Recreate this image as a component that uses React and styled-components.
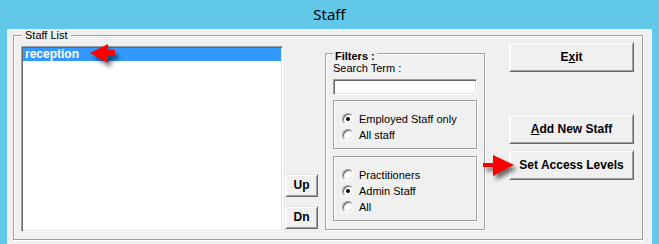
import React from "react";
import styled, { createGlobalStyle } from "styled-components";

const Global = createGlobalStyle`
  html, body { margin: 0; padding: 0; overflow: hidden; background: #62c8e9; }
`;

const Window = styled.div`
  position: relative;
  width: 659px;
  height: 244px;
  background: #62c8e9;
  display: flex;
  flex-direction: column;
  font-family: "Liberation Sans", Arial, sans-serif;
  color: #000;
`;

const TitleBar = styled.div`
  height: 29px;
  display: flex;
  align-items: center;
  justify-content: center;
  font-family: "Noto Sans", sans-serif;
  font-size: 15px;
  padding-bottom: 1px;
  box-sizing: border-box;
`;

const Client = styled.div`
  flex: 1;
  width: 645px;
  margin-left: 7px;
  background: #f0f0f0;
  padding: 6px 0 0 6px;
  box-sizing: border-box;
`;

const Etched = styled.div`
  position: relative;
  box-sizing: border-box;
  border: 1px solid #a0a0a0;
  box-shadow: inset 1px 1px 0 #fff, 1px 1px 0 #fff;
`;

const StaffGroup = styled(Etched)`
  width: 630px;
  height: 205px;
`;

const Caption = styled.span`
  position: absolute;
  left: ${(p) => p.$left}px;
  top: ${(p) => p.$top}px;
  padding: 0 ${(p) => p.$pad}px;
  background: #f0f0f0;
  font-size: 11px;
  line-height: 13px;
  font-weight: ${(p) => (p.$bold ? 700 : 400)};
`;

const GroupBody = styled.div`
  display: flex;
  align-items: flex-start;
  padding: 6px 0 0 7px;
`;

const ListBox = styled.div`
  width: 262px;
  height: 186px;
  margin-top: 4px;
  box-sizing: border-box;
  background: #fff;
  border: 1px solid;
  border-color: #a0a0a0 #fff #fff #a0a0a0;
  box-shadow: inset 1px 1px 0 #696969, inset -1px -1px 0 #e3e3e3;
  padding: 1px;
`;

const ListItem = styled.div`
  height: 13px;
  line-height: 13px;
  padding-left: 2px;
  font-size: 12px;
  font-weight: 700;
  background: ${(p) => (p.$selected ? "#3399ff" : "transparent")};
  color: ${(p) => (p.$selected ? "#fff" : "#000")};
`;

const MoveCol = styled.div`
  display: flex;
  flex-direction: column;
  gap: 9px;
  margin: 132px 0 0 2px;
`;

const Button = styled.div`
  box-sizing: border-box;
  width: ${(p) => p.$w}px;
  height: ${(p) => p.$h}px;
  margin-top: ${(p) => p.$mt || 0}px;
  display: flex;
  align-items: center;
  justify-content: center;
  background: #f0f0f0;
  border: 1px solid;
  border-color: #e3e3e3 #696969 #696969 #fff;
  box-shadow: inset 1px 1px 0 #fff, inset -1px -1px 0 #a0a0a0;
  font-size: 12px;
  font-weight: 700;
  padding-bottom: 1px;
  u { text-decoration-thickness: 1px; text-underline-offset: 1px; }
`;

const Filters = styled(Etched)`
  width: 160px;
  height: 177px;
  margin: 11px 0 0 7px;
  padding: 8px 0 0 7px;
  display: flex;
  flex-direction: column;
  align-items: flex-start;
`;

const Label = styled.div`
  font-size: 11px;
  line-height: 13px;
`;

const TextInput = styled.div`
  box-sizing: border-box;
  width: 144px;
  height: 16px;
  margin-top: 4px;
  background: #fff;
  border: 1px solid;
  border-color: #a0a0a0 #fff #fff #a0a0a0;
  box-shadow: inset 1px 1px 0 #696969, inset -1px -1px 0 #e3e3e3;
`;

const OptionBox = styled(Etched)`
  width: 144px;
  height: ${(p) => p.$h}px;
  margin-top: ${(p) => p.$mt}px;
  padding: 10px 0 0 8px;
`;

const RadioRow = styled.div`
  height: 16px;
  display: flex;
  align-items: center;
  gap: 5px;
  font-size: 11px;
  line-height: 13px;
`;

const Radio = styled.span`
  position: relative;
  box-sizing: border-box;
  width: 12px;
  height: 12px;
  border-radius: 50%;
  background: #fff;
  border: 1px solid;
  border-color: #a0a0a0 #fff #fff #a0a0a0;
  box-shadow: inset 1px 1px 0 #696969, inset -1px -1px 0 #e3e3e3;
  &::after {
    content: "";
    display: ${(p) => (p.$checked ? "block" : "none")};
    position: absolute;
    left: 3px;
    top: 3px;
    width: 4px;
    height: 4px;
    border-radius: 50%;
    background: #000;
  }
`;

const ActionCol = styled.div`
  display: flex;
  flex-direction: column;
  margin-left: 24px;
`;

const ArrowSvg = styled.svg`
  position: absolute;
  left: ${(p) => p.$x}px;
  top: ${(p) => p.$y}px;
  filter: drop-shadow(3px 4px 2px rgba(0, 0, 0, 0.55));
`;

const Arrow = ({ x, y, dir }) => (
  <ArrowSvg $x={x} $y={y} width="40" height="32" viewBox="0 0 40 32">
    {dir === "left" ? (
      <polygon points="2,11 20,2 20,8 27,8 27,14 20,14 20,21" fill="#ff0000" />
    ) : (
      <polygon points="2,11 12,11 12,3 33,13 12,24 12,15 2,15" fill="#ff0000" />
    )}
  </ArrowSvg>
);

const Option = ({ checked, children }) => (
  <RadioRow>
    <Radio $checked={checked} />
    <span>{children}</span>
  </RadioRow>
);

export default function App() {
  return (
    <Window>
      <Global />
      <TitleBar>Staff</TitleBar>
      <Client>
        <StaffGroup>
          <Caption $left={8} $top={-7} $pad={3}>Staff List</Caption>
          <GroupBody>
            <ListBox>
              <ListItem $selected>reception</ListItem>
            </ListBox>
            <MoveCol>
              <Button $w={33} $h={23}>Up</Button>
              <Button $w={33} $h={23}>Dn</Button>
            </MoveCol>
            <Filters>
              <Caption $left={7} $top={-4} $pad={2} $bold>Filters :</Caption>
              <Label>Search Term :</Label>
              <TextInput />
              <OptionBox $h={49} $mt={5}>
                <Option checked>Employed Staff only</Option>
                <Option>All staff</Option>
              </OptionBox>
              <OptionBox $h={65} $mt={7}>
                <Option>Practitioners</Option>
                <Option checked>Admin Staff</Option>
                <Option>All</Option>
              </OptionBox>
            </Filters>
            <ActionCol>
              <Button $w={125} $h={30}>E<u>x</u>it</Button>
              <Button $w={125} $h={30} $mt={42}><u>A</u>dd New Staff</Button>
              <Button $w={125} $h={30} $mt={6}>Set Access Levels</Button>
            </ActionCol>
          </GroupBody>
        </StaffGroup>
      </Client>
      <Arrow x={88} y={42} dir="left" />
      <Arrow x={481} y={152} dir="right" />
    </Window>
  );
}
